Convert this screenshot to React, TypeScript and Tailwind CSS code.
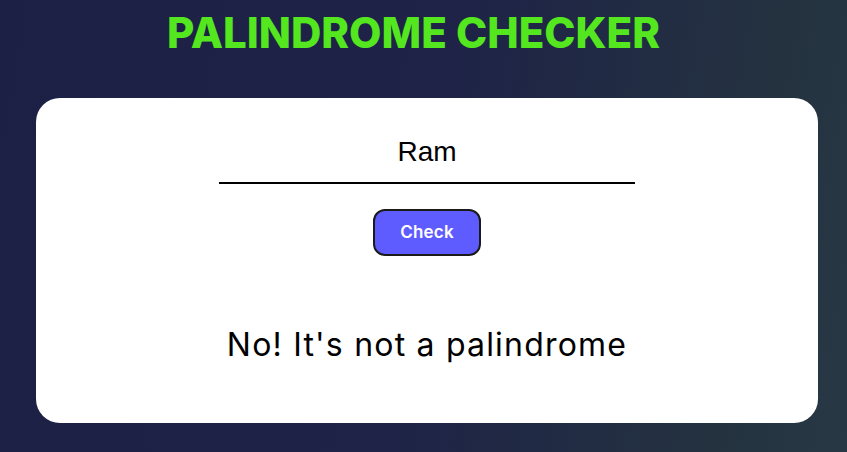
export default function App() {
  return (
    <div className="min-h-screen w-full bg-[linear-gradient(100deg,#1c2045_0%,#1e2347_50%,#243240_85%,#283845_100%)] font-['Inter',sans-serif]">
      {/* Title */}
      <div className="h-[98px] pt-[12px]">
        <h1 className="ml-[167px] w-[491px] whitespace-nowrap text-[42px] leading-none font-extrabold text-[#54e61f]">
          PALINDROME CHECKER
        </h1>
      </div>

      {/* Card */}
      <div className="ml-[36px] w-[782px] rounded-[24px] bg-white pt-[23px] pb-[62px] flex flex-col items-center">
        <input
          type="text"
          defaultValue="Ram"
          className="w-[416px] h-[63px] pt-[1px] border-b-2 border-black bg-transparent text-center text-[28px] text-black outline-none font-['Liberation_Sans',Arial,sans-serif]"
        />
        <button className="mt-[25px] w-[108px] h-[47px] rounded-[12px] border-2 border-[#1a1a1a] bg-[#5f5cff] text-white text-[17px] font-semibold tracking-[0.2px]">
          Check
        </button>
        <p className="mt-[73px] text-[32px] leading-none text-black whitespace-nowrap tracking-[1.2px]">
          No! It's not a palindrome
        </p>
      </div>
    </div>
  );
}
